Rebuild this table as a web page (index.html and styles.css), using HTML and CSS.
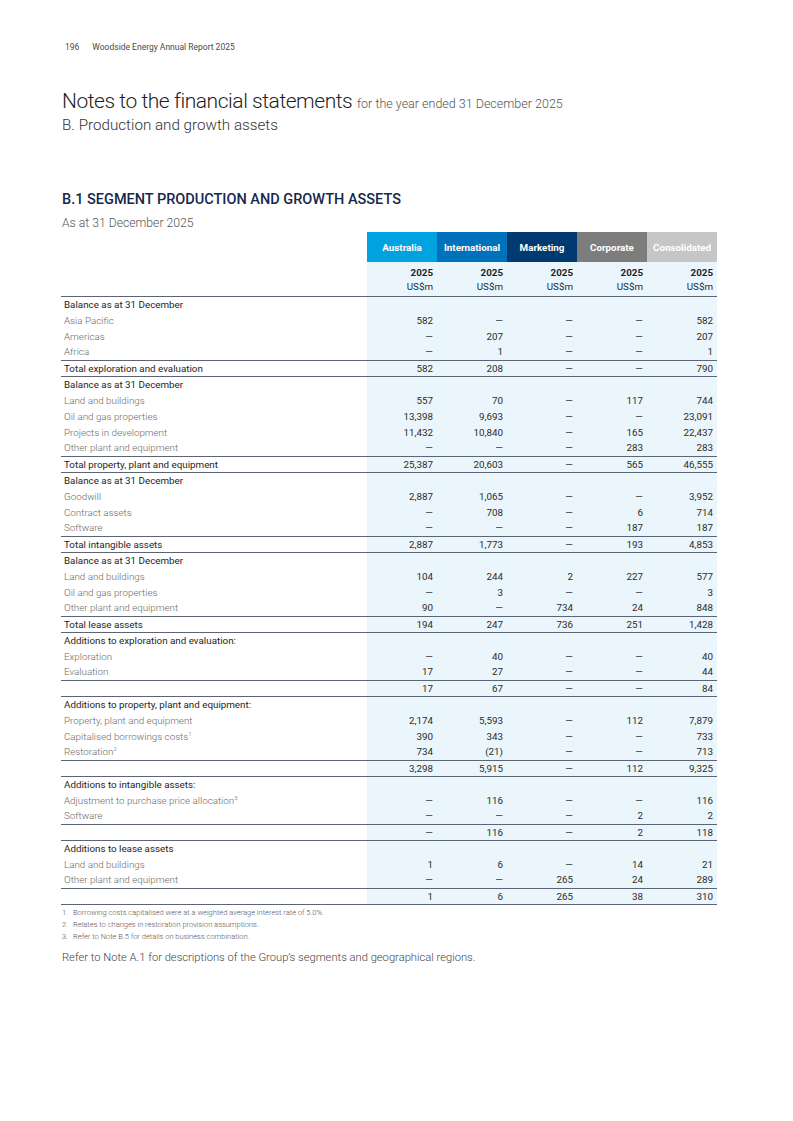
FILE: index.html
```html
<!DOCTYPE html>
<html lang="en">
<head>
<meta charset="utf-8">
<title>Notes to the financial statements</title>
<link rel="stylesheet" href="styles.css">
</head>
<body>
<div class="page">
  <div class="running">
    <span class="pg">196</span>
    <span class="rt">Woodside Energy Annual Report 2025</span>
  </div>

  <h1 class="title">Notes to the financial statements <span class="title-small">for the year ended 31 December 2025</span></h1>
  <div class="subtitle">B. Production and growth assets</div>

  <h2 class="section">B.1 SEGMENT PRODUCTION AND GROWTH ASSETS</h2>
  <div class="asat">As at 31 December 2025</div>

  <table class="fin">
    <colgroup>
      <col class="c-label">
      <col class="c-num"><col class="c-num"><col class="c-num"><col class="c-num"><col class="c-num">
    </colgroup>
    <thead>
      <tr class="seg">
        <th></th>
        <th class="s-aus">Australia</th>
        <th class="s-int">International</th>
        <th class="s-mkt">Marketing</th>
        <th class="s-corp">Corporate</th>
        <th class="s-cons">Consolidated</th>
      </tr>
      <tr class="yr">
        <th></th><th>2025</th><th>2025</th><th>2025</th><th>2025</th><th>2025</th>
      </tr>
      <tr class="unit">
        <th></th><th>US$m</th><th>US$m</th><th>US$m</th><th>US$m</th><th>US$m</th>
      </tr>
    </thead>
    <tbody>
      <tr class="head"><td>Balance as at 31 December</td><td></td><td></td><td></td><td></td><td></td></tr>
      <tr><td>Asia Pacific</td><td>582</td><td>—</td><td>—</td><td>—</td><td>582</td></tr>
      <tr><td>Americas</td><td>—</td><td>207</td><td>—</td><td>—</td><td>207</td></tr>
      <tr><td>Africa</td><td>—</td><td>1</td><td>—</td><td>—</td><td>1</td></tr>
      <tr class="total"><td>Total exploration and evaluation</td><td>582</td><td>208</td><td>—</td><td>—</td><td>790</td></tr>

      <tr class="head"><td>Balance as at 31 December</td><td></td><td></td><td></td><td></td><td></td></tr>
      <tr><td>Land and buildings</td><td>557</td><td>70</td><td>—</td><td>117</td><td>744</td></tr>
      <tr><td>Oil and gas properties</td><td>13,398</td><td>9,693</td><td>—</td><td>—</td><td>23,091</td></tr>
      <tr><td>Projects in development</td><td>11,432</td><td>10,840</td><td>—</td><td>165</td><td>22,437</td></tr>
      <tr><td>Other plant and equipment</td><td>—</td><td>—</td><td>—</td><td>283</td><td>283</td></tr>
      <tr class="total"><td>Total property, plant and equipment</td><td>25,387</td><td>20,603</td><td>—</td><td>565</td><td>46,555</td></tr>

      <tr class="head"><td>Balance as at 31 December</td><td></td><td></td><td></td><td></td><td></td></tr>
      <tr><td>Goodwill</td><td>2,887</td><td>1,065</td><td>—</td><td>—</td><td>3,952</td></tr>
      <tr><td>Contract assets</td><td>—</td><td>708</td><td>—</td><td>6</td><td>714</td></tr>
      <tr><td>Software</td><td>—</td><td>—</td><td>—</td><td>187</td><td>187</td></tr>
      <tr class="total"><td>Total intangible assets</td><td>2,887</td><td>1,773</td><td>—</td><td>193</td><td>4,853</td></tr>

      <tr class="head"><td>Balance as at 31 December</td><td></td><td></td><td></td><td></td><td></td></tr>
      <tr><td>Land and buildings</td><td>104</td><td>244</td><td>2</td><td>227</td><td>577</td></tr>
      <tr><td>Oil and gas properties</td><td>—</td><td>3</td><td>—</td><td>—</td><td>3</td></tr>
      <tr><td>Other plant and equipment</td><td>90</td><td>—</td><td>734</td><td>24</td><td>848</td></tr>
      <tr class="total"><td>Total lease assets</td><td>194</td><td>247</td><td>736</td><td>251</td><td>1,428</td></tr>

      <tr class="head"><td>Additions to exploration and evaluation:</td><td></td><td></td><td></td><td></td><td></td></tr>
      <tr><td>Exploration</td><td>—</td><td>40</td><td>—</td><td>—</td><td>40</td></tr>
      <tr><td>Evaluation</td><td>17</td><td>27</td><td>—</td><td>—</td><td>44</td></tr>
      <tr class="total"><td></td><td>17</td><td>67</td><td>—</td><td>—</td><td>84</td></tr>

      <tr class="head"><td>Additions to property, plant and equipment:</td><td></td><td></td><td></td><td></td><td></td></tr>
      <tr><td>Property, plant and equipment</td><td>2,174</td><td>5,593</td><td>—</td><td>112</td><td>7,879</td></tr>
      <tr><td>Capitalised borrowings costs<sup>1</sup></td><td>390</td><td>343</td><td>—</td><td>—</td><td>733</td></tr>
      <tr><td>Restoration<sup>2</sup></td><td>734</td><td>(21)</td><td>—</td><td>—</td><td>713</td></tr>
      <tr class="total"><td></td><td>3,298</td><td>5,915</td><td>—</td><td>112</td><td>9,325</td></tr>

      <tr class="head"><td>Additions to intangible assets:</td><td></td><td></td><td></td><td></td><td></td></tr>
      <tr><td>Adjustment to purchase price allocation<sup>3</sup></td><td>—</td><td>116</td><td>—</td><td>—</td><td>116</td></tr>
      <tr><td>Software</td><td>—</td><td>—</td><td>—</td><td>2</td><td>2</td></tr>
      <tr class="total"><td></td><td>—</td><td>116</td><td>—</td><td>2</td><td>118</td></tr>

      <tr class="head"><td>Additions to lease assets</td><td></td><td></td><td></td><td></td><td></td></tr>
      <tr><td>Land and buildings</td><td>1</td><td>6</td><td>—</td><td>14</td><td>21</td></tr>
      <tr><td>Other plant and equipment</td><td>—</td><td>—</td><td>265</td><td>24</td><td>289</td></tr>
      <tr class="total"><td></td><td>1</td><td>6</td><td>265</td><td>38</td><td>310</td></tr>
    </tbody>
  </table>

  <ol class="notes">
    <li>Borrowing costs capitalised were at a weighted average interest rate of 5.0%.</li>
    <li>Relates to changes in restoration provision assumptions.</li>
    <li>Refer to Note B.5 for details on business combination.</li>
  </ol>

  <p class="refer">Refer to Note A.1 for descriptions of the Group’s segments and geographical regions.</p>
</div>
</body>
</html>
```

FILE: styles.css
```css
html, body {
  margin: 0;
  padding: 0;
  background: #ffffff;
}

body {
  font-family: Roboto, "Noto Sans", sans-serif;
  color: #2b2b2b;
}

.page {
  width: 793px;
  height: 1121px;
  box-sizing: border-box;
  padding: 41px 0 0 62px;
}

.running {
  display: flex;
  gap: 13px;
  font-size: 8.5px;
  line-height: 12px;
  color: #4a4a4a;
  padding-left: 3px;
}

.title {
  margin: 37px 0 0 0;
  font-size: 21px;
  line-height: 22px;
  font-weight: 300;
  color: #1e1e1e;
  letter-spacing: -0.45px;
}

.title-small {
  font-size: 12.5px;
  font-weight: 300;
  color: #555555;
  letter-spacing: 0;
}

.subtitle {
  margin-top: 0;
  font-size: 15.2px;
  line-height: 20px;
  font-weight: 300;
  color: #333333;
}

.section {
  margin: 55px 0 0 0;
  font-size: 14.5px;
  line-height: 20px;
  font-weight: 500;
  color: #15284b;
}

.asat {
  margin-top: 5px;
  font-size: 12.2px;
  line-height: 16px;
  font-weight: 300;
  color: #555555;
}

.fin {
  margin-top: 1px;
  margin-left: -1px;
  border-collapse: collapse;
  table-layout: fixed;
  width: 656px;
  font-size: 9.8px;
}

.c-label { width: 306px; }
.c-num { width: 70px; }

.fin th, .fin td {
  padding: 0 4px 0 0;
  height: 16px;
  line-height: 15px;
  white-space: nowrap;
  box-sizing: border-box;
  text-align: right;
  vertical-align: middle;
}

.fin th:first-child, .fin td:first-child {
  text-align: left;
  padding-left: 3px;
  background: #ffffff;
}

.fin th:not(:first-child), .fin td:not(:first-child) {
  background: #eaf5fc;
}

.seg th {
  height: 30px;
  color: #ffffff;
  font-weight: 700;
  text-align: center;
  padding: 0;
  font-size: 9.8px;
}

.seg th:first-child { background: #ffffff; }
.fin .seg .s-aus { background: #00a3e0; text-align: center; }
.fin .seg .s-int { background: #0072bc; text-align: center; }
.fin .seg .s-mkt { background: #003a70; text-align: center; }
.fin .seg .s-corp { background: #7d7d7d; text-align: center; }
.fin .seg .s-cons { background: #c6c6c6; text-align: center; }

.yr th {
  font-weight: 700;
  color: #1e1e1e;
  height: 18px;
  vertical-align: bottom;
  line-height: 15px;
}

.unit th {
  font-weight: 400;
  color: #2b2b2b;
  height: 16px;
  border-bottom: 1.5px solid #5b6573;
  vertical-align: top;
  line-height: 14px;
}

.fin td {
  color: #2b2b2b;
  font-weight: 400;
}

.fin td:first-child {
  color: #6a6a6a;
  font-weight: 300;
}

.fin tr.head td:first-child,
.fin tr.total td:first-child {
  color: #1e1e1e;
  font-weight: 400;
}

.fin tr.total td {
  border-top: 1.5px solid #5b6573;
  border-bottom: 1.5px solid #5b6573;
}

.fin sup {
  font-size: 6px;
  line-height: 0;
  vertical-align: 4px;
}

.notes {
  margin: 2px 0 0 0;
  padding: 0;
  list-style: none;
  counter-reset: n;
  font-size: 7.5px;
  line-height: 12px;
  color: #555555;
  font-weight: 300;
}

.notes li {
  counter-increment: n;
  display: flex;
  height: 12px;
  align-items: center;
}

.notes li::before {
  content: counter(n) ".";
  width: 11px;
  flex: none;
}

.refer {
  margin: 7px 0 0 0;
  font-size: 11.2px;
  line-height: 16px;
  color: #444444;
  font-weight: 300;
}
```
